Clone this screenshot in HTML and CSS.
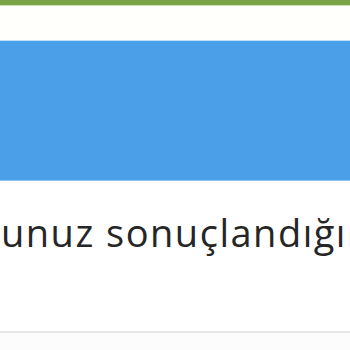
FILE: index.html
```html
<!DOCTYPE html>
<html lang="tr">
<head>
<meta charset="utf-8">
<link rel="stylesheet" href="styles.css">
</head>
<body>
<div class="topbar"></div>
<header class="header"></header>
<section class="hero"></section>
<main class="content">
  <p class="message">unuz sonuçlandığında</p>
</main>
<footer class="footer"></footer>
</body>
</html>
```
FILE: styles.css
```css
html, body {
  margin: 0;
  padding: 0;
  background: #ffffff;
  overflow: hidden;
}
body {
  width: 350px;
  height: 350px;
  display: flex;
  flex-direction: column;
  font-family: "Open Sans", "Noto Sans", sans-serif;
}
.topbar {
  height: 5px;
  background: #7ba446;
  border-bottom: 1px solid #cfe3b0;
}
.header {
  height: 34px;
  background: #fffffc;
  border-bottom: 1px solid #bfe0f7;
}
.hero {
  height: 139px;
  background: #4a9fe8;
  border-bottom: 1px solid #8cc6f0;
}
.content {
  height: 150px;
  padding-top: 26px;
  box-sizing: border-box;
  overflow: hidden;
}
.message {
  margin: 0 0 0 1px;
  font-size: 38px;
  line-height: 50px;
  color: #262626;
  white-space: nowrap;
  letter-spacing: 1.5px;
}
.footer {
  flex: 1;
  border-top: 2px solid #e6e6e6;
  background: #fcfcfc;
}
```
